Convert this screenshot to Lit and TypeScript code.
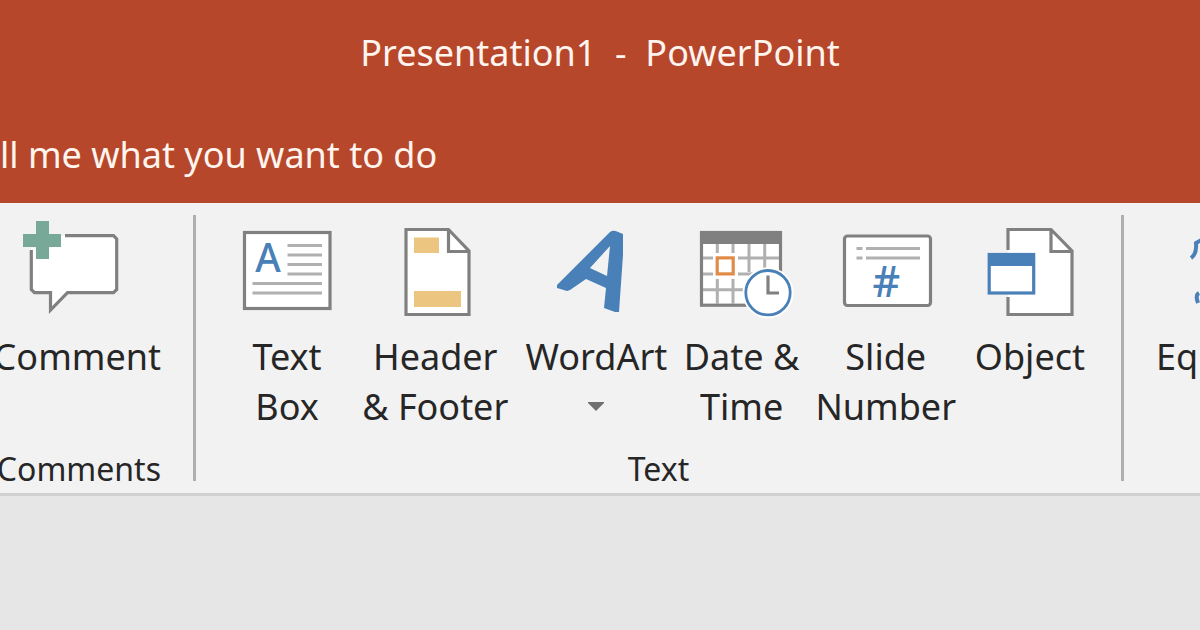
import { LitElement, html, svg, css } from "lit";
import { customElement, property } from "lit/decorators.js";

const icons = {
  comment: svg`
    <path fill="#fff" d="M8 29V71l3 3h16v18l18-18h46l3-3V20l-3-3H29v12z"/>
    <path fill="none" stroke="#808080" stroke-width="3.2"
      d="M42 16.7H90.500L93.700 20V70.500L90.500 73.700H44.500L27.500 91V73.700H11.500L8.300 70.500V31"/>
    <path fill="#78a898" d="M13 2H26V15H38V28H26V40H13V28H0V15H13z"/>`,
  textBox: svg`
    <rect x="11.500" y="13.500" width="85.500" height="76" fill="#fff" stroke="#808080" stroke-width="3.2"/>
    <path stroke="#b0b0b0" stroke-width="3"
      d="M54.500 26.500H89M54.500 36H89M54.500 45.500H89M54.500 55H89M19.500 64.500H89M19.500 74H89"/>
    <text class="glyph" x="35" y="53" font-size="39" text-anchor="middle">A</text>`,
  headerFooter: svg`
    <path fill="#fff" stroke="#808080" stroke-width="3.2" d="M25 10.500H67.500L88 32V95.500H25z"/>
    <path fill="none" stroke="#808080" stroke-width="3.2" d="M67.500 10.500V32.500H88"/>
    <path fill="#ecc680" d="M33 18.500H58V34H33zM33 72H80V88H33z"/>`,
  wordArt: svg`
    <path fill="#4a80b8" fill-rule="evenodd"
      d="M15 66L68 13Q71 11 75 12.500L81 15V36L77 93H73L62 89L64 69L44 60L28 71L25 72L15 69zM68 27L48 49L65 57z"/>`,
  dateTime: svg`
    <rect x="13.500" y="13.500" width="79" height="72.700" fill="#fff" stroke="#808080" stroke-width="3.2"/>
    <path stroke="#b0b0b0" stroke-width="3"
      d="M29.300 25V34M45 25V34M61 25V53M76.700 25V53M15 39H25M50 39H91M15 55H25M50 55H91M15 70.700H60M29.300 60V85M45 60V85"/>
    <path fill="#808080" d="M12 12H94V25H12z"/>
    <rect x="29.200" y="38.900" width="16" height="16" fill="#fff" stroke="#e08c48" stroke-width="3.2"/>
    <circle cx="80" cy="73.700" r="25.500" fill="#fff"/>
    <circle cx="80" cy="73.700" r="22.200" fill="#fff" stroke="#4a80b8" stroke-width="2.800"/>
    <path fill="none" stroke="#808080" stroke-width="3.2" d="M80 56.500V74H91"/>`,
  slideNumber: svg`
    <rect x="12.500" y="17" width="86" height="69.500" rx="3" fill="#fff" stroke="#808080" stroke-width="3.2"/>
    <path stroke="#b0b0b0" stroke-width="3" d="M24.500 29.500H30.500M34 29.500H88M24.500 39H30.500M34 39H88"/>
    <text class="glyph" x="54.500" y="78" font-size="43" text-anchor="middle">#</text>`,
  object: svg`
    <path fill="#fff" d="M32 10.500H75L96 32V95.500H32z"/>
    <path fill="none" stroke="#808080" stroke-width="3.2"
      d="M32 31V10.500H75L96 32V95.500H32V78M75 10.500V32.500H96"/>
    <rect x="13.200" y="35.500" width="44.500" height="38.500" fill="#fff" stroke="#4a80b8" stroke-width="3.2"/>
    <path fill="#4a80b8" d="M12 34H59V47H12z"/>`,
  equation: svg`
    <path fill="none" stroke="#4a80b8" stroke-width="4" d="M36 39Q42 35 41 24L48 20M44 74Q40 76 43 84"/>`,
};

type IconName = keyof typeof icons;

@customElement("ribbon-button")
class RibbonButton extends LitElement {
  @property() icon: IconName = "comment";
  @property({ type: Array }) lines: string[] = [];
  @property({ type: Boolean }) menu = false;
  @property({ type: Number }) iconWidth = 108;

  static styles = css`
    :host {
      display: block;
      min-width: 0;
    }
    .button {
      display: flex;
      flex-direction: column;
      align-items: center;
      width: 100%;
      margin: 0;
      padding: 4px 0 0;
      border: 0;
      background: none;
      color: #262626;
      font: inherit;
      line-height: 50px;
      white-space: nowrap;
    }
    .icon {
      display: block;
      flex: none;
      height: 100px;
      margin-bottom: 13px;
      overflow: visible;
    }
    .glyph {
      fill: #4a80b8;
      font-family: "Noto Sans", sans-serif;
      font-weight: 500;
    }
    .arrow {
      display: block;
      width: 16px;
      height: 9px;
      margin-top: 20px;
    }
  `;

  render() {
    return html`
      <button class="button" type="button">
        <svg
          class="icon"
          width=${this.iconWidth}
          height="100"
          viewBox="0 0 ${this.iconWidth} 100"
          aria-hidden="true"
        >${icons[this.icon]}</svg>
        ${this.lines.map((line) => html`<span>${line}</span>`)}
        ${this.menu
          ? html`<svg class="arrow" viewBox="0 0 16 9" aria-hidden="true">
              <path fill="#707070" d="M0 0H16V1L8 9L0 1z" />
            </svg>`
          : ""}
      </button>
    `;
  }
}

@customElement("app-root")
class AppRoot extends LitElement {
  static styles = css`
    :host {
      display: flex;
      flex-direction: column;
      min-height: 100vh;
      overflow: hidden;
      background: #e6e6e6;
      color: #262626;
      font-family: "Noto Sans", "Open Sans", sans-serif;
      font-size: 36px;
    }
    .header {
      background: #b7472a;
      color: #fff4ee;
    }
    .title {
      margin: 0;
      padding: 28px 0 24px;
      font-size: 36px;
      font-weight: 400;
      line-height: 50px;
      text-align: center;
      white-space: pre;
    }
    .tell {
      display: block;
      margin: 0;
      padding: 28px 0 23px;
      border: 0;
      background: none;
      color: inherit;
      font: inherit;
      line-height: 50px;
      white-space: nowrap;
    }
    .ribbon {
      display: grid;
      grid-template-columns: minmax(0, 193fr) 3px minmax(0, 925fr) 3px minmax(0, 76fr);
      padding: 12px 0 0;
      border-bottom: 3px solid #d0d0d0;
      background: #f2f2f2;
    }
    .group {
      display: flex;
      flex-direction: column;
      height: 278px;
    }
    .comments {
      align-items: flex-end;
      padding-right: 32px;
    }
    .text {
      padding: 0 33px;
    }
    .symbols {
      align-items: flex-start;
      padding-left: 31px;
    }
    .divider {
      height: 266px;
      background: #b0b0b0;
    }
    .tools {
      display: grid;
      grid-template-columns: 116fr 148fr 142fr 116fr 140fr 116fr;
      column-gap: 16px;
    }
    .caption {
      margin: auto 0 4px;
      font-size: 32px;
      font-weight: 400;
      line-height: 40px;
      text-align: center;
    }
  `;

  render() {
    return html`
      <header class="header">
        <h1 class="title">Presentation1  -  PowerPoint</h1>
        <button class="tell" type="button">ll me what you want to do</button>
      </header>
      <main class="ribbon">
        <section class="group comments">
          <ribbon-button icon="comment" .lines=${["Comment"]}></ribbon-button>
          <h2 class="caption">Comments</h2>
        </section>
        <div class="divider"></div>
        <section class="group text">
          <div class="tools">
            <ribbon-button icon="textBox" .lines=${["Text", "Box"]}></ribbon-button>
            <ribbon-button icon="headerFooter" .lines=${["Header", "& Footer"]}></ribbon-button>
            <ribbon-button icon="wordArt" .lines=${["WordArt"]} menu></ribbon-button>
            <ribbon-button icon="dateTime" .lines=${["Date &", "Time"]}></ribbon-button>
            <ribbon-button icon="slideNumber" .lines=${["Slide", "Number"]}></ribbon-button>
            <ribbon-button icon="object" .lines=${["Object"]}></ribbon-button>
          </div>
          <h2 class="caption">Text</h2>
        </section>
        <div class="divider"></div>
        <section class="group symbols">
          <ribbon-button icon="equation" .iconWidth=${44} .lines=${["Eq"]}></ribbon-button>
        </section>
      </main>
    `;
  }
}
